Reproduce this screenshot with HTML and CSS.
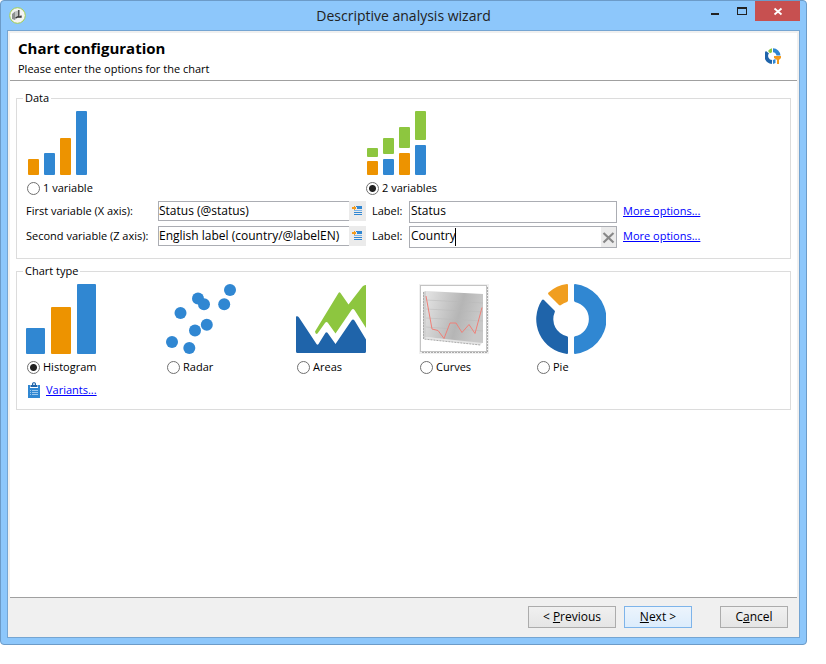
FILE: index.html
```html
<!DOCTYPE html>
<html lang="en">
<head>
<meta charset="utf-8">
<title>Descriptive analysis wizard</title>
<link rel="stylesheet" href="styles.css">
</head>
<body>
<svg class="defs" aria-hidden="true">
  <symbol id="picker" viewBox="0 0 17 20">
    <path fill="#f39a1c" d="M3 6h2V5h1v1h1v2H6v1H5V8H3z"/>
    <path fill="#2f86d2" d="M7 5h6v3H8V6H7z"/>
    <path fill="#7db4e6" d="M5 9h8v1H5z"/>
    <path fill="#2f86d2" d="M5 11h8v1H5zM5 13h8v1H5z"/>
  </symbol>
</svg>
<div class="window">
  <header class="titlebar">
    <svg class="app-icon" viewBox="0 0 17 17" aria-hidden="true">
      <circle cx="8.500" cy="8.500" r="7.800" fill="#f4f4f2" stroke="#a3cf4f"/>
      <path d="M3 7l3-2.500v8.500l-3-1z" fill="#8d9090"/>
      <path d="M6 4.500l3-1v7l-3 2.500z" fill="#c0c2c2"/>
      <path d="M9.800 3v7M12 8.500v1.500H8.500l-2 1" stroke="#333" stroke-width="1.300" fill="none"/>
    </svg>
    <h1 class="window-title">Descriptive analysis wizard</h1>
    <div class="controls">
      <button class="control" aria-label="Minimize"><svg viewBox="0 0 27 20"><path d="M10 12h8v2h-8z" fill="#222"/></svg></button>
      <button class="control" aria-label="Maximize"><svg viewBox="0 0 27 20"><path fill-rule="evenodd" d="M9 6h10v8H9zM10 8v5h8V8z" fill="#222"/></svg></button>
      <button class="control close" aria-label="Close"><svg viewBox="0 0 45 20"><path d="M19.500 7.500l7 6M26.500 7.500l-7 6" stroke="#fff" stroke-width="1.800"/></svg></button>
    </div>
  </header>
  <div class="client">
    <main class="page">
      <div class="heading">
        <div>
          <h2>Chart configuration</h2>
          <p>Please enter the options for the chart</p>
        </div>
        <svg class="heading-icon" viewBox="0 0 16 16" aria-hidden="true">
          <path d="M7 14A6.200 6.200 0 0 1 2.400 4.200" fill="none" stroke="#1f64aa" stroke-width="3.800"/>
          <path d="M3 3A7 7 0 0 1 7 .3v4l-2 1z" fill="#8cc63f"/>
          <path d="M8 .3a7.500 7.500 0 0 1 7.500 7.200h-4A4 4 0 0 0 8 4.300z" fill="#2f86d2"/>
          <path d="M8 12l2.500-1v4L8 16z" fill="#2f86d2"/>
          <path d="M9 8h7v2l-2 2v4h-2v-4l-3-2z" fill="#f39a1c"/>
        </svg>
      </div>
      <form class="options" id="wizard">
        <fieldset>
          <legend>Data</legend>
          <div class="data-grid">
            <div class="choice one">
              <label for="one"><svg class="data-icon" viewBox="0 0 62 66" aria-hidden="true">
                <g fill="#ed9300"><rect x="2" y="49" width="11" height="16" rx="1"/><rect x="34" y="28" width="11" height="37" rx="1"/></g>
                <g fill="#3087d2"><rect x="18" y="43" width="11" height="22" rx="1"/><rect x="50" y="1" width="11" height="64" rx="1"/></g>
              </svg></label>
              <span class="radio"><input type="radio" name="vars" id="one"><label for="one">1 variable</label></span>
            </div>
            <div class="choice two">
              <label for="two"><svg class="data-icon" viewBox="0 0 62 66" aria-hidden="true">
                <g fill="#8dc63f"><rect x="1" y="38" width="11" height="9" rx="1"/><rect x="17" y="28" width="11" height="16" rx="1"/><rect x="33" y="17" width="11" height="21" rx="1"/><rect x="49" y="1" width="11" height="29" rx="1"/></g>
                <g fill="#ed9300"><rect x="1" y="51" width="11" height="14" rx="1"/><rect x="33" y="43" width="11" height="22" rx="1"/></g>
                <g fill="#3087d2"><rect x="17" y="49" width="11" height="16" rx="1"/><rect x="49" y="35" width="11" height="30" rx="1"/></g>
              </svg></label>
              <span class="radio"><input type="radio" name="vars" id="two" checked><label for="two">2 variables</label></span>
            </div>

            <label for="first">First variable (X axis):</label>
            <div class="picker"><input type="text" id="first" value="Status (@status)"><button type="button" aria-label="Select first variable"><svg><use href="#picker"/></svg></button></div>
            <label class="indent" for="first-label">Label:</label>
            <div class="entry"><input type="text" id="first-label" value="Status"></div>
            <a class="indent" href="#">More options...</a>

            <label for="second">Second variable (Z axis):</label>
            <div class="picker"><input type="text" id="second" value="English label (country/@labelEN)"><button type="button" aria-label="Select second variable"><svg><use href="#picker"/></svg></button></div>
            <label class="indent" for="second-label">Label:</label>
            <div class="entry"><input type="text" id="second-label" value="Country"><i class="caret"></i><button type="button" aria-label="Clear"><svg viewBox="0 0 15 20"><path d="M2.500 6l10 9.500M12.500 6l-10 9.500" stroke="#888" stroke-width="2.200"/></svg></button></div>
            <a class="indent" href="#">More options...</a>
          </div>
        </fieldset>

        <fieldset>
          <legend>Chart type</legend>
          <div class="type-grid">
            <div class="choice">
              <label for="histogram"><svg class="type-icon" viewBox="0 0 70 70" aria-hidden="true">
                <rect y="44" width="19" height="26" rx="1" fill="#3087d2"/><rect x="25" y="23" width="20" height="47" rx="1" fill="#ed9300"/><rect x="51" width="19" height="70" rx="1" fill="#3087d2"/>
              </svg></label>
              <span class="radio"><input type="radio" name="type" id="histogram" checked><label for="histogram">Histogram</label></span>
            </div>
            <div class="choice">
              <label for="radar"><svg class="type-icon" viewBox="0 0 70 70" aria-hidden="true" fill="#3087d2">
                <circle cx="6" cy="58" r="6"/><circle cx="23.300" cy="64" r="6"/><circle cx="14.500" cy="29" r="6"/><circle cx="29" cy="46.500" r="6"/><circle cx="40.800" cy="40.800" r="6"/><circle cx="32" cy="14.500" r="6"/><circle cx="38" cy="20.300" r="6"/><circle cx="58.200" cy="20.300" r="6"/><circle cx="64" cy="6" r="6"/>
              </svg></label>
              <span class="radio"><input type="radio" name="type" id="radar"><label for="radar">Radar</label></span>
            </div>
            <div class="choice">
              <label for="areas"><svg class="type-icon" viewBox="0 0 70 70" aria-hidden="true">
                <path d="M19 47.500L42.500 9Q43.500 7.500 44.500 9L52.500 20.500 66.500 2.500Q68 .8 70 1V44L58.500 26Q57 24 55.500 26L39.500 49.500 32 39Q30.500 37.200 29 39L21.500 49.500Q19.500 51 19 47.500z" fill="#8dc63f"/>
                <path d="M0 32.500Q1.500 31.500 3 33.500L20.500 60Q21.500 61.500 22.500 60L29.500 48.800Q30.500 47.500 31.500 48.800L39.500 60 55.500 36.500Q57 34.500 58.500 36.500L70 55.500V67.500Q70 69 68.500 69H1.500Q0 69 0 67.500z" fill="#1f64aa"/>
              </svg></label>
              <span class="radio"><input type="radio" name="type" id="areas"><label for="areas">Areas</label></span>
            </div>
            <div class="choice">
              <label for="curves"><svg class="type-icon" viewBox="0 0 70 70" aria-hidden="true">
                <defs><linearGradient id="board" x2="1" y2=".25"><stop offset="0" stop-color="#e4e4e4"/><stop offset=".65" stop-color="#b5b5b5"/><stop offset="1" stop-color="#c9c9c9"/></linearGradient></defs>
                <path d="M0 0h70v70H0z" fill="#f0f0f0"/>
                <path d="M1.500 1.500h66v66h-66z" fill="#fff" stroke="#909090" stroke-dasharray="1 1"/>
                <path d="M68.500 3v65.500H3" fill="none" stroke="#aaa" stroke-dasharray="2 1"/>
                <path d="M4 8l3-1v47l-3 1z" fill="#d0d0d0"/>
                <path d="M4 55l3-2 57 5-3 3z" fill="#e4e4e4"/>
                <path d="M7 7l57 3v49L7 53z" fill="url(#board)"/>
                <path d="M7 16l57 3M7 25l57 3M7 34l57 3M7 43l57 4" stroke="#b8b8b8" stroke-width=".5" fill="none"/>
                <path d="M4.500 8v47l57 6" stroke="#aaa" stroke-dasharray="2 1" fill="none"/>
                <path d="M7 12l6 33 6 1.500 6 8 6-15.500h6l6 9.500 7-8 6 9 7-26" fill="none" stroke="#ef8078"/>
              </svg></label>
              <span class="radio"><input type="radio" name="type" id="curves"><label for="curves">Curves</label></span>
            </div>
            <div class="choice">
              <label for="pie"><svg class="type-icon" viewBox="0 0 70 70" aria-hidden="true">
                <path d="M38 1Q38 0 39 0A35.200 35.200 0 0 1 39 70Q38 70 38 69V53.500Q38 52.500 39 52.300A17.600 17.600 0 0 0 39 17.900Q38 17.500 38 16.500z" fill="#3087d2"/>
                <path d="M6 16Q7 15 8 16L18.500 26.500Q19.200 27.300 18.700 28.300A17.600 17.600 0 0 0 31 52.300Q32 52.500 32 53.500V69Q32 70 31 70A35 35 0 0 1 6 16z" fill="#1f64aa"/>
                <path d="M12.500 10.500Q11.500 9.500 12.500 8.500A35 35 0 0 1 31 0Q32 0 32 1V16.500Q32 17.500 31 17.900A17 17 0 0 0 25 21Q24 21.800 23 21z" fill="#f09e20"/>
              </svg></label>
              <span class="radio"><input type="radio" name="type" id="pie"><label for="pie">Pie</label></span>
            </div>
          </div>
          <div class="variants">
            <svg viewBox="0 0 12 16" aria-hidden="true"><path d="M0 3h12v13H0z" fill="#3087d2"/><path d="M2 3h8v3H2z" fill="#fff"/><path d="M2.500 3H4V1.500L5 .3h2L8 1.500V3h1.500v2h-7z" fill="#1f64aa"/><path d="M5 1.500h2v1.200H5z" fill="#fff"/><path d="M2 8.500h1M4 8.500h6M2 10.500h1M4 10.500h6M2 12.500h1M4 12.500h6" stroke="#9cc8ee"/></svg>
            <a href="#">Variants...</a>
          </div>
        </fieldset>
      </form>
    </main>
    <footer class="actions">
      <button type="button" class="wide">&lt; <u>P</u>revious</button>
      <button type="button" class="primary"><u>N</u>ext &gt;</button>
      <button type="button" class="cancel">C<u>a</u>ncel</button>
    </footer>
  </div>
</div>
</body>
</html>
```
FILE: styles.css
```css
* { box-sizing: border-box; }

body {
  margin: 0;
  padding: 0 19px 19px 0;
  background: #fff;
  color: #000;
  font: 11px/16px "Open Sans", "Noto Sans", sans-serif;
}

h1, h2, p { margin: 0; }
button, input { font: inherit; font-size: 12px; color: inherit; }
svg { display: block; }
a { color: #00f; }
.defs { display: none; }

.window {
  display: flex;
  flex-direction: column;
  min-height: calc(100vh - 19px);
  padding: 0 6px 6px;
  border: 1px solid #6c9bc8;
  border-radius: 4px;
  background: #8dc7fb;
}

.titlebar {
  display: grid;
  grid-template-columns: 1fr auto 1fr;
  height: 29px;
}
.app-icon { width: 17px; height: 17px; margin: 6px 2px; }
.window-title {
  color: #222;
  font-size: 14px;
  font-weight: 400;
  line-height: 29px;
}
.controls { display: flex; justify-content: flex-end; height: 20px; }
.control { width: 27px; padding: 0; border: 0; background: none; }
.control.close { width: 45px; background: #c75050; }

.client {
  display: flex;
  flex: 1;
  flex-direction: column;
  border: 1px solid #75a5d2;
  background: #f0f0f0;
}
.page {
  flex: 1;
  margin: 2px 2px 0;
  background: #fff;
  border-bottom: 1px solid #a0a0a0;
}

.heading {
  display: flex;
  justify-content: space-between;
  align-items: flex-start;
  height: 48px;
  padding: 5px 16px 0 8px;
  border-bottom: 1px solid #a0a0a0;
}
.heading h2 { font-size: 15px; line-height: 20px; }
.heading p { margin-top: 3px; }
.heading-icon { width: 16px; height: 16px; margin-top: 10px; }

.options { padding: 9px 6px; }
fieldset {
  min-width: 0;
  margin: 0 0 4px;
  padding: 0 9px;
  border: 1px solid #dcdcdc;
}
legend { margin-left: -3px; padding: 0 2px; }

.radio { display: flex; align-items: center; gap: 3px; height: 20px; }
.radio input {
  appearance: none;
  width: 13px;
  height: 13px;
  margin: 0 0 0 1px;
  border: 1px solid #707070;
  border-radius: 50%;
  background: #fff;
}
.radio input:checked { background: radial-gradient(circle, #222 3px, #fff 4px); }

.data-grid {
  display: grid;
  grid-template-columns: 132px 208px 43px 208px auto;
  row-gap: 3px;
  padding: 4px 0 10px;
}
.one { grid-column: 1 / 3; }
.two { grid-column: 3 / -1; }
.two .radio input { margin-left: 0; }
.data-icon { width: 62px; height: 66px; margin-bottom: 2px; }
.data-grid > label, .data-grid > a {
  justify-self: start;
  line-height: 19px;
  white-space: nowrap;
}
.indent { margin-left: 6px; }

.picker, .entry { display: flex; position: relative; }
.picker { height: 20px; }
.entry { height: 22px; }
.picker input, .entry input {
  flex: 1;
  min-width: 0;
  padding: 0;
  border: 1px solid #abadb3;
  background: #fff;
}
.entry input { padding: 0 1px 2px; }
.picker input { border-right: 0; padding-bottom: 1px; }
.picker button, .entry button { padding: 0; border: 0; background: #ebebeb; }
.picker button { width: 17px; }
.picker svg { width: 17px; height: 20px; }
.entry button { position: absolute; top: 1px; right: 1px; width: 15px; height: 20px; }
.caret { position: absolute; top: 2px; left: 46px; width: 1px; height: 18px; background: #000; }

.type-grid {
  display: grid;
  grid-template-columns: 140px 130px 123px 117px auto;
  padding-top: 5px;
}
.type-icon { width: 70px; height: 70px; margin-bottom: 3px; }
.variants { display: flex; align-items: center; gap: 6px; padding: 5px 2px 11px; }
.variants svg { width: 12px; height: 16px; }

.actions {
  display: flex;
  justify-content: flex-end;
  gap: 8px;
  margin: 0 2px;
  padding: 8px 9px 9px;
}
.actions button {
  width: 68px;
  height: 22px;
  padding: 0;
  border: 1px solid #acacac;
  background: linear-gradient(#f0f0f0, #e5e5e5);
}
.actions .wide { width: 88px; }
.actions .primary { border-color: #7eb4ea; background: linear-gradient(#ecf4fc, #dcecfc); }
.actions .cancel { margin-left: 20px; }
```
